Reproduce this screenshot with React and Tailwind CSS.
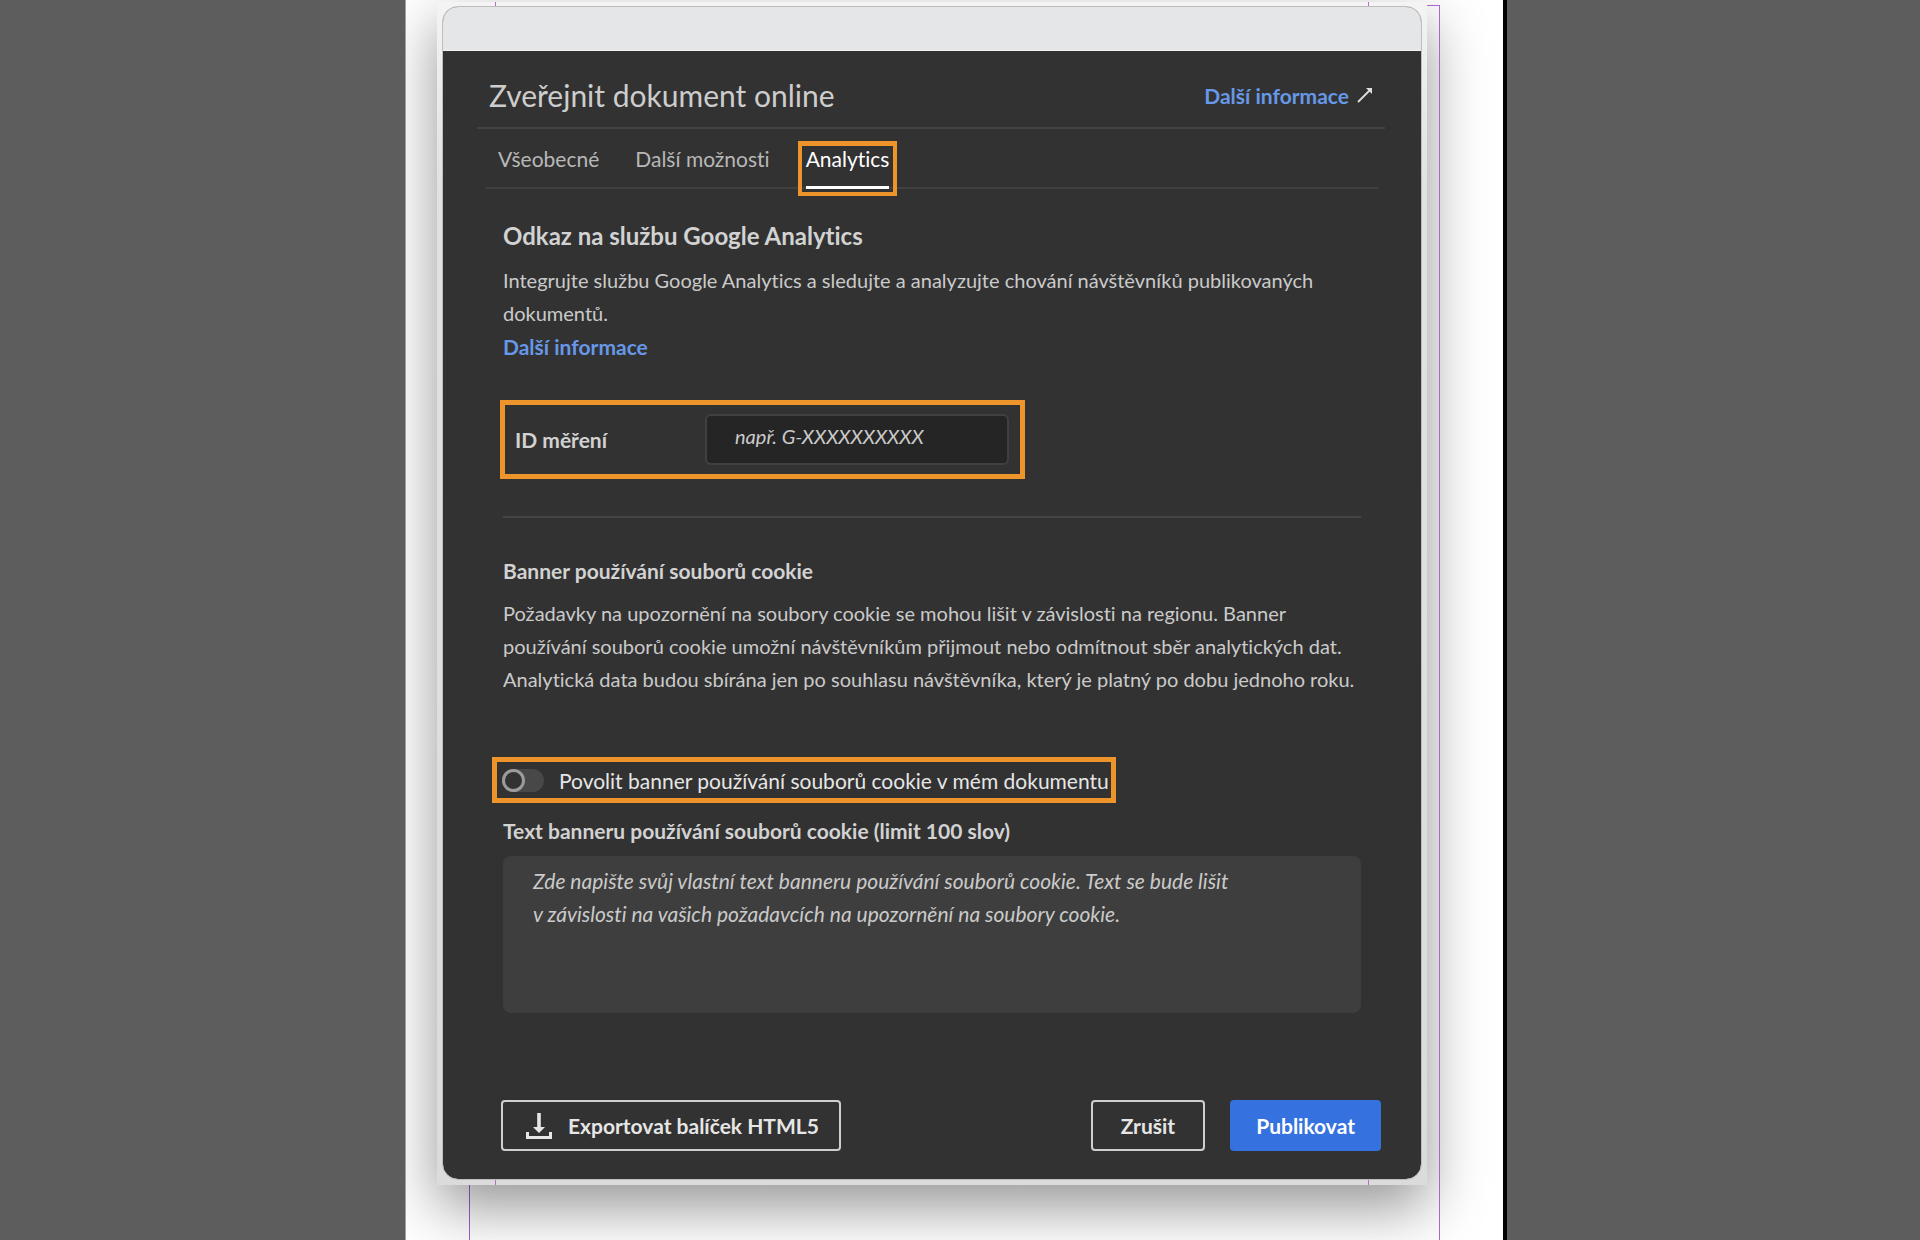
import React from "react";

const body = "text-xl leading-[33px] text-[#cacaca]";
const strong = "text-[21px] leading-[33px] font-bold text-[#d2d2d2]";
const link = "text-[21px] leading-[33px] font-bold text-[#6798e8]";
const highlight = "border-[5px] border-[#ed952b]";

function ArrowIcon() {
  return (
    <svg viewBox="0 0 16 16" className="size-4" fill="none" stroke="#dedede" strokeWidth="1.8" aria-hidden="true">
      <path d="M1 15 14 2" />
      <path d="M9 1h6v6z" fill="#dedede" stroke="none" />
    </svg>
  );
}

function DownloadIcon() {
  return (
    <svg viewBox="0 0 26 26" className="size-[26px]" fill="#e6e6e6" aria-hidden="true">
      <path d="M11.2 0h3.6v14h4.2l-6 6-6-6h4.2z" />
      <path d="M0 19h3v4h20v-4h3v7H0z" />
    </svg>
  );
}

function Tabs() {
  return (
    <nav role="tablist" className="ml-[9px] mr-[7px] flex gap-9 border-b-2 border-[#404040] pl-3 pt-[15px] text-[21px] leading-[30px] text-[#b8b8b8]">
      <button role="tab" aria-selected="false" className="-mb-0.5 pb-[15px]">Všeobecné</button>
      <button role="tab" aria-selected="false" className="-mb-0.5 pb-[15px]">Další možnosti</button>
      <button role="tab" aria-selected="true" className="relative -mb-0.5 border-b-[3px] border-white pb-3 text-white">
        Analytics
        <span className="pointer-events-none absolute -inset-x-2 -bottom-2.5 -top-[3px] border-4 border-t-[5px] border-[#ed952b]" />
      </button>
    </nav>
  );
}

export default function App() {
  return (
    <div className="grid min-h-screen grid-cols-[405fr_1102fr_413fr] bg-[#5d5d5d] font-['Lato',sans-serif] [font-variant-ligatures:none]">
      <div />
      <div className="relative overflow-hidden border-l border-r-4 border-l-[#a0a0a0] border-r-black bg-white pb-14 pl-[31px] pr-[76px] pt-0.5">
        <span className="absolute bottom-0 left-[63px] top-[600px] w-px bg-[#9d5fd0]" />
        <div className="relative bg-linear-to-b from-[#f4f4f4] via-[#e2e2e1] via-15% to-[#dcdbdb] p-1.5 pt-[5px] shadow-[0_22px_55px_rgba(0,0,0,0.42)]">
          <span className="absolute inset-y-0 left-[58px] w-px bg-[#b06fd0]" />
          <span className="absolute inset-y-0 right-[58px] w-px bg-[#b06fd0]" />
          <main className="relative overflow-hidden rounded-[15px] bg-[#323232] outline-1 outline-[#bdbdbd]">
            <div className="h-11 border-b border-[#f2f2f2] bg-[#e4e6e8]" />
            <div className="pb-7 pl-[34px] pr-9">
              <header className="flex items-center justify-between border-b-2 border-[#424242] pb-3 pl-3 pr-3 pt-6">
                <h1 className="text-3xl leading-10 text-[#cdcdcd]">Zveřejnit dokument online</h1>
                <a href="#informace" className={`${link} flex items-center gap-2`}>
                  Další informace
                  <ArrowIcon />
                </a>
              </header>
              <Tabs />
              <div className="ml-[26px] mr-6 pt-[30px]">
                <h2 className="text-2xl leading-[33px] font-bold text-[#d2d2d2]">Odkaz na službu Google Analytics</h2>
                <p className={`${body} mt-3`}>
                  Integrujte službu Google Analytics a sledujte a analyzujte chování návštěvníků publikovaných dokumentů.
                </p>
                <a href="#analytics" className={`${link} block w-fit`}>Další informace</a>

                <div className={`${highlight} -ml-[3px] mt-[37px] flex w-fit items-center py-[9px] pl-2.5 pr-[11px]`}>
                  <label htmlFor="measurement-id" className={`${strong} w-[190px]`}>ID měření</label>
                  <input
                    id="measurement-id"
                    type="text"
                    placeholder="např. G-XXXXXXXXXX"
                    className="h-[51px] w-[304px] rounded-md border-2 border-[#404040] bg-[#252525] pb-2 pl-7 text-xl italic text-[#cacaca] placeholder:text-[#cacaca]"
                  />
                </div>

                <hr className="mt-[37px] border-t-2 border-[#454545]" />

                <h3 className={`${strong} mt-9`}>Banner používání souborů cookie</h3>
                <p className={`${body} mt-2.5`}>
                  Požadavky na upozornění na soubory cookie se mohou lišit v závislosti na regionu. Banner
                  používání souborů cookie umožní návštěvníkům přijmout nebo odmítnout sběr analytických dat.
                  Analytická data budou sbírána jen po souhlasu návštěvníka, který je platný po dobu jednoho roku.
                </p>

                <div className={`${highlight} -ml-[11px] mt-[61px] flex h-[46px] w-fit items-center gap-[15px] pl-[5px] pr-0.5`}>
                  <input
                    id="cookie-banner"
                    type="checkbox"
                    role="switch"
                    className="h-[23px] w-[42px] appearance-none rounded-full bg-[#484848] before:block before:size-[23px] before:rounded-full before:border-[3px] before:border-[#9b9b9b] before:bg-[#323232] before:content-['']"
                  />
                  <label htmlFor="cookie-banner" className="text-[21px] leading-[33px] text-[#e6e6e6]">
                    Povolit banner používání souborů cookie v mém dokumentu
                  </label>
                </div>

                <label htmlFor="banner-text" className={`${strong} mt-[11px] block w-fit`}>
                  Text banneru používání souborů cookie (limit 100 slov)
                </label>
                <textarea
                  id="banner-text"
                  placeholder={"Zde napište svůj vlastní text banneru používání souborů cookie. Text se bude lišit v\u00a0závislosti na vašich požadavcích na upozornění na soubory cookie."}
                  className="mt-[9px] block h-[157px] w-full resize-none rounded-lg bg-[#3e3e3e] py-2 pl-[30px] pr-[100px] text-[21px] leading-[33px] italic text-[#cacaca] placeholder:text-[#cacaca]"
                />
              </div>

              <footer className="ml-6 mr-1 mt-[87px] flex h-[51px] items-stretch gap-[25px] text-[21px] font-bold">
                <button className="mr-auto flex items-center gap-4 rounded-[4px] border-2 border-[#cfcfcf] pl-[23px] pr-5 text-[#e6e6e6]">
                  <DownloadIcon />
                  Exportovat balíček HTML5
                </button>
                <button className="rounded-[4px] border-2 border-[#cfcfcf] px-7 text-[#e6e6e6]">Zrušit</button>
                <button className="rounded-[4px] bg-[#3572e0] px-[26px] text-white">Publikovat</button>
              </footer>
            </div>
          </main>
        </div>
        <span className="absolute bottom-0 right-[63px] top-[5px] w-[13px] border-r border-t border-[#a965d0]" />
      </div>
      <div />
    </div>
  );
}
